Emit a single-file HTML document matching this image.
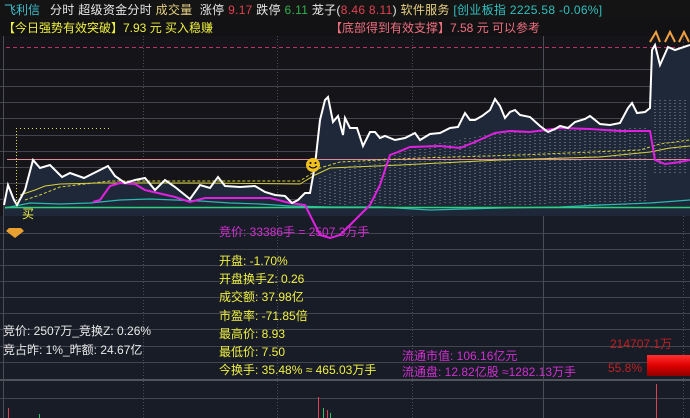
<!DOCTYPE html>
<html><head><meta charset="utf-8"><style>
html,body{margin:0;padding:0;background:#171a23;width:690px;height:418px;overflow:hidden;font-family:"Liberation Sans","Noto Sans CJK SC",sans-serif}
.t{position:absolute;white-space:nowrap;font-size:12px;line-height:14px}
</style></head><body>
<svg width="690" height="418" style="position:absolute;left:0;top:0">
<rect x="0" y="0" width="690" height="20" fill="#141414"/>
<rect x="0" y="20" width="690" height="16" fill="#121214"/>
<rect x="0" y="36" width="690" height="180" fill="#141419"/>
<rect x="0" y="216" width="690" height="202" fill="#181c27"/>
<g stroke="#42454e" stroke-width="1">
<line x1="0" y1="69.5" x2="690" y2="69.5"/><line x1="0" y1="86.5" x2="690" y2="86.5"/><line x1="0" y1="102.5" x2="690" y2="102.5"/><line x1="0" y1="118.5" x2="690" y2="118.5"/><line x1="0" y1="135.5" x2="690" y2="135.5"/><line x1="0" y1="151.5" x2="690" y2="151.5"/><line x1="0" y1="167.5" x2="690" y2="167.5"/><line x1="0" y1="183.5" x2="690" y2="183.5"/><line x1="0" y1="199.5" x2="690" y2="199.5"/>
<line x1="0" y1="233.5" x2="690" y2="233.5"/><line x1="0" y1="249.5" x2="690" y2="249.5"/><line x1="0" y1="265.5" x2="690" y2="265.5"/><line x1="0" y1="281.5" x2="690" y2="281.5"/><line x1="0" y1="297.5" x2="690" y2="297.5"/><line x1="0" y1="313.5" x2="690" y2="313.5"/><line x1="0" y1="329.5" x2="690" y2="329.5"/><line x1="0" y1="346.5" x2="690" y2="346.5"/><line x1="0" y1="362.5" x2="690" y2="362.5"/><line x1="0" y1="398.5" x2="690" y2="398.5"/>
</g>
<line x1="0" y1="380" x2="690" y2="380" stroke="#50545c" stroke-width="2"/>
<line x1="3.5" y1="36" x2="3.5" y2="418" stroke="#4a4d55"/>
<g stroke="#4a4d55" stroke-dasharray="1,2"><line x1="143.5" y1="36" x2="143.5" y2="418"/><line x1="277.5" y1="36" x2="277.5" y2="418"/><line x1="412.5" y1="36" x2="412.5" y2="418"/><line x1="683.5" y1="36" x2="683.5" y2="418"/></g>
<line x1="543.5" y1="36" x2="543.5" y2="418" stroke="#4a4d55"/>
<line x1="6" y1="47.5" x2="690" y2="47.5" stroke="#c0306a" stroke-dasharray="4,3"/>
<path d="M4,205 L8,185 L14,200 L17,205 L25,190 L33,160 L40,168 L50,165 L62,177 L70,173 L84,178 L90,175 L100,170 L108,166 L115,176 L125,183 L135,180 L145,178 L155,190 L165,180 L175,187 L190,199 L200,185 L210,188 L218,177 L225,186 L240,187 L255,186 L265,192 L275,195 L285,196 L292,203 L298,200 L305,193 L310,193 L315,165 L320,120 L325,100 L328,97 L333,122 L338,116 L343,135 L345,118 L350,128 L357,128 L363,146 L370,132 L375,132 L380,138 L385,136 L395,140 L405,138 L415,133 L420,140 L430,134 L440,133 L450,128 L458,127 L465,113 L470,120 L475,120 L482,116 L490,110 L495,99 L500,106 L505,118 L510,112 L515,110 L520,115 L530,117 L540,126 L548,132 L555,129 L560,126 L568,128 L575,122 L585,119 L590,116 L600,124 L610,125 L620,123 L628,108 L632,103 L637,113 L645,112 L650,108 L652,50 L655,45 L660,65 L668,47 L675,50 L690,45 L690,216 L4,216 Z" fill="#1f2839"/>
<g stroke="#8a8f9a" stroke-dasharray="1,2" stroke-width="1">
<path d="M320,178V205M325,176V205M330,174V205M335,172V205M340,170V205M345,168V205M350,166V205M355,165V205M360,164V205M365,163V205M370,162V205M375,161V205M380,160V205M385,158V205M390,155V205M395,152V205M400,150V205M405,148V205M410,147V205M415,147V205M420,146V205M425,146V205M430,145V205M435,144V205M440,143V205M445,142V205M450,142V205M455,141V205M460,140V205M465,138V205M470,138V205M475,137V205M480,136V205M485,135V205M490,135V205M495,134V205M500,134V205M505,133V205M510,133V205M515,132V205M520,132V205M525,132V205M530,132V205M535,131V205M540,131V205M545,131V205M550,130V205M555,130V205M560,130V205M565,130V205M570,130V205M575,130V205M580,130V205M585,129V205M590,129V205M595,129V205M600,129V205M605,129V205M610,129V205M615,129V205M620,129V205M625,129V205M630,128V205M635,128V205M640,128V205M645,128V205M655,100V175M660,100V175M665,100V175M670,100V175M675,100V175M680,100V175M685,100V175"/>
</g>
<line x1="7" y1="159.5" x2="690" y2="159.5" stroke="#e08a9a"/>
<path d="M20,195 L35,190 L45,186 L60,184 L100,183 L200,183 L300,184 L315,175 L330,168 L400,165 L500,160 L600,157 L650,152 L670,148 L690,146" stroke="#d8d040" fill="none" stroke-width="1"/>
<path d="M25,200 L40,195 L60,187 L110,181 L200,181 L300,181 L320,168 L340,162 L420,158 L520,155 L640,150 L660,144 L690,140" stroke="#d8d040" fill="none" stroke-dasharray="3,2"/>
<path d="M5,208 L30,203 L60,204 L90,203 L120,200 L150,199 L200,201 L230,203 L260,204 L290,206 L330,207 L380,207 L430,210 L500,208 L560,207 L600,205 L650,203 L690,200" stroke="#2bb8b0" fill="none" stroke-width="1.2"/>
<line x1="5" y1="207.5" x2="690" y2="207.5" stroke="#2ed080" stroke-width="1.5"/>
<path d="M93,202 L100,200 L110,186 L120,183 L135,184 L145,190 L175,197 L190,202 L205,198 L250,198 L270,198 L290,203 L305,205 L310,215 L315,225 L320,235 L330,238 L340,235 L350,225 L360,215 L370,205 L380,185 L390,155 L398,152 L410,147 L440,146 L460,148 L475,142 L495,133 L510,131 L530,132 L560,128 L590,129 L620,131 L650,131 L655,160 L665,164 L680,162 L690,160" stroke="#e020e0" fill="none" stroke-width="2"/>
<path d="M4,205 L8,185 L14,200 L17,205 L25,190 L33,160 L40,168 L50,165 L62,177 L70,173 L84,178 L90,175 L100,170 L108,166 L115,176 L125,183 L135,180 L145,178 L155,190 L165,180 L175,187 L190,199 L200,185 L210,188 L218,177 L225,186 L240,187 L255,186 L265,192 L275,195 L285,196 L292,203 L298,200 L305,193 L310,193 L315,165 L320,120 L325,100 L328,97 L333,122 L338,116 L343,135 L345,118 L350,128 L357,128 L363,146 L370,132 L375,132 L380,138 L385,136 L395,140 L405,138 L415,133 L420,140 L430,134 L440,133 L450,128 L458,127 L465,113 L470,120 L475,120 L482,116 L490,110 L495,99 L500,106 L505,118 L510,112 L515,110 L520,115 L530,117 L540,126 L548,132 L555,129 L560,126 L568,128 L575,122 L585,119 L590,116 L600,124 L610,125 L620,123 L628,108 L632,103 L637,113 L645,112 L650,108 L652,50 L655,45 L660,65 L668,47 L675,50 L690,45" stroke="#ffffff" fill="none" stroke-width="2"/>
<line x1="16.5" y1="128" x2="16.5" y2="205" stroke="#e0e040" stroke-dasharray="1,2"/>
<line x1="16" y1="128.5" x2="110" y2="128.5" stroke="#e0e040" stroke-dasharray="1,3"/>
<circle cx="313" cy="165" r="7" fill="#f0c020"/>
<circle cx="310.5" cy="163" r="1" fill="#000"/><circle cx="315.5" cy="163" r="1" fill="#000"/>
<path d="M309,166 Q313,170 317,166" stroke="#000" fill="none"/>
<path d="M9,228 L21,228 L24,231 L15,238 L6,231 Z" fill="#e8a030"/>
<path d="M650,42 L656,32 L660,42 M665,42 L670,32 L675,42 M679,42 L684,32 L689,42" stroke="#f0a040" stroke-width="2" fill="none"/>
<defs><linearGradient id="rg" x1="0" y1="0" x2="0" y2="1"><stop offset="0" stop-color="#ff3030"/><stop offset="0.5" stop-color="#e00000"/><stop offset="1" stop-color="#900000"/></linearGradient></defs>
<rect x="647" y="355" width="43" height="21" fill="url(#rg)"/>
<line x1="656.5" y1="384" x2="656.5" y2="418" stroke="#e04050"/>
<g stroke-width="1"><line x1="8.5" y1="408" x2="8.5" y2="418" stroke="#e04050"/><line x1="39.5" y1="414" x2="39.5" y2="418" stroke="#30c060"/><line x1="318.5" y1="397" x2="318.5" y2="418" stroke="#e04050"/><line x1="323.5" y1="408" x2="323.5" y2="418" stroke="#30c060"/><line x1="327.5" y1="410" x2="327.5" y2="418" stroke="#e04050"/><line x1="330.5" y1="413" x2="330.5" y2="418" stroke="#30c060"/></g>
</svg>
<div class="t" style="left:4px;top:3px;color:#40c0d0">飞利信</div>
<div class="t" style="left:50px;top:3px;color:#e8e8e8;letter-spacing:0.3px">分时 超级资金分时 <span style="color:#e8d080">成交量</span> &nbsp;涨停 <span style="color:#e04050">9.17</span> 跌停 <span style="color:#30b050">6.11</span> 茏子(<span style="color:#e04050">8.46 8.11</span>) <span style="color:#e8d080">软件服务</span> <span style="color:#30c0c0">[创业板指 2225.58 -0.06%]</span></div>
<div class="t" style="left:3px;top:21px;color:#f0f040">【今日强势有效突破】7.93 元 买入稳赚</div>
<div class="t" style="left:330px;top:21px;color:#f07080">【底部得到有效支撑】7.58 元 可以参考</div>
<div class="t" style="left:22px;top:207px;color:#f0f040">买</div>
<div class="t" style="left:219px;top:225px;color:#d030d0">竞价: 33386手 = 2507.3万手</div>
<div class="t" style="left:219px;top:252px;color:#f0f040;line-height:18.2px">开盘: -1.70%<br>开盘换手Z: 0.26<br>成交额: 37.98亿<br>市盈率: -71.85倍<br>最高价: 8.93<br>最低价: 7.50<br>今换手: 35.48% ≈ 465.03万手</div>
<div class="t" style="left:3px;top:322px;color:#e8e8e8;line-height:19px">竞价: 2507万_竞换Z: 0.26%<br>竞占昨: 1%_昨额: 24.67亿</div>
<div class="t" style="left:402px;top:348px;color:#d030d0;line-height:16px">流通市值: 106.16亿元<br>流通盘: 12.82亿股 ≈1282.13万手</div>
<div class="t" style="left:610px;top:337px;color:#c02020">214707.1万</div>
<div class="t" style="left:608px;top:361px;color:#c02020">55.8%</div>
</body></html>
